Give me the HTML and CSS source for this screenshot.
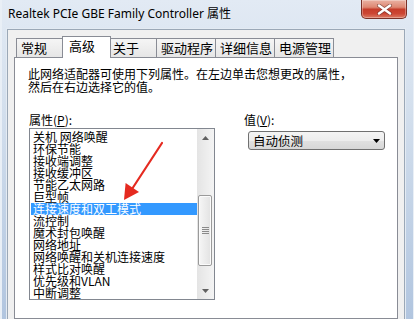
FILE: index.html
```html
<!DOCTYPE html>
<html lang="zh-CN">
<head>
<meta charset="utf-8">
<title>Realtek PCIe GBE Family Controller 属性</title>
<link rel="stylesheet" href="styles.css">
</head>
<body>
<div class="window">
  <div class="titlebar">
    <span class="title">Realtek PCIe GBE Family Controller 属性</span>
    <div class="close">
      <svg width="15" height="11" viewBox="0 0 15 11">
        <path d="M2 1.5 L13 9.5 M13 1.5 L2 9.5" stroke="#5a2a24" stroke-width="4" stroke-linecap="round" fill="none" opacity="0.55"/>
        <path d="M2 1.5 L13 9.5 M13 1.5 L2 9.5" stroke="#ffffff" stroke-width="2.4" stroke-linecap="round" fill="none"/>
      </svg>
    </div>
  </div>
  <div class="dialog">
    <div class="tabs">
      <div class="tab">常规</div>
      <div class="tab active">高级</div>
      <div class="tab">关于</div>
      <div class="tab">驱动程序</div>
      <div class="tab">详细信息</div>
      <div class="tab">电源管理</div>
    </div>
    <div class="panel">
      <p class="desc">此网络适配器可使用下列属性。在左边单击您想更改的属性，<br>然后在右边选择它的值。</p>
      <div class="props">
        <div class="col-left">
          <div class="label">属性(<u>P</u>):</div>
          <div class="listbox">
            <ul class="items">
              <li>关机 网络唤醒</li>
              <li>环保节能</li>
              <li>接收端调整</li>
              <li>接收缓冲区</li>
              <li>节能乙太网路</li>
              <li>巨型帧</li>
              <li class="selected">连接速度和双工模式</li>
              <li>流控制</li>
              <li>魔术封包唤醒</li>
              <li>网络地址</li>
              <li>网络唤醒和关机连接速度</li>
              <li>样式比对唤醒</li>
              <li>优先级和VLAN</li>
              <li>中断调整</li>
            </ul>
            <div class="scrollbar">
              <div class="sb-btn"><svg width="7" height="4" viewBox="0 0 7 4"><path d="M0 4 L3.5 0 L7 4 Z" fill="#606060"/></svg></div>
              <div class="sb-track">
                <div class="thumb"><span class="grip"></span></div>
              </div>
              <div class="sb-btn"><svg width="7" height="4" viewBox="0 0 7 4"><path d="M0 0 L3.5 4 L7 0 Z" fill="#606060"/></svg></div>
            </div>
          </div>
        </div>
        <div class="col-right">
          <div class="label">值(<u>V</u>):</div>
          <div class="combo">
            <span class="combo-text">自动侦测</span>
            <svg width="7" height="4" viewBox="0 0 7 4"><path d="M0 0 L3.5 4 L7 0 Z" fill="#000"/></svg>
          </div>
        </div>
      </div>
    </div>
  </div>
  <svg class="annotation" width="414" height="319" viewBox="0 0 414 319">
    <line x1="162" y1="143" x2="132" y2="189" stroke="#e52a20" stroke-width="2.2" stroke-linecap="round"/>
    <path d="M124 200 L125.6 183 L139 192 Z" fill="#e52a20"/>
  </svg>
</div>
</body>
</html>
```

FILE: styles.css
```css
* { box-sizing: border-box; }

body {
  margin: 0;
  background: #d9e4f0;
}

.window {
  position: relative;
  width: 414px;
  height: 319px;
  overflow: hidden;
  display: flex;
  flex-direction: column;
  background: linear-gradient(#e2eaf4 0%, #d3dfed 35%, #b1c5df 100%);
  box-shadow: inset 2px 0 0 #e9eff6, inset -1px 0 0 #e9eff6;
  font-family: "Noto Sans CJK SC", sans-serif;
  color: #000;
}

.titlebar {
  flex: none;
  height: 29px;
  display: flex;
  justify-content: space-between;
  align-items: flex-start;
}

.title {
  padding: 6px 0 0 8px;
  font: 12px/16px "Noto Sans", "Noto Sans CJK SC", sans-serif;
}

.close {
  width: 46px;
  height: 19px;
  margin-right: 7px;
  border: 1px solid #7a3128;
  border-top: none;
  border-radius: 0 0 5px 5px;
  background: linear-gradient(#eab2a3 0%, #de8873 40%, #c63d2b 52%, #cc4634 75%, #dc7a63 100%);
  box-shadow: inset 0 0 0 1px rgba(255, 255, 255, 0.3);
  display: flex;
  align-items: center;
  justify-content: center;
}

.dialog {
  flex: 1;
  display: flex;
  flex-direction: column;
  margin: 0 9px 0 7px;
  padding: 6px 6px 0 6px;
  background: #f0f0f0;
  border: 1px solid #9ba8b7;
  border-bottom: none;
  box-shadow: 0 0 0 1px #e4ebf3;
}

.tabs {
  display: flex;
  align-items: flex-end;
  padding-left: 2px;
  margin-bottom: -1px;
  position: relative;
  z-index: 1;
}

.tab {
  min-width: 49px;
  height: 20px;
  margin-right: -1px;
  padding: 0 2px 0 4px;
  border: 1px solid #898c95;
  background: linear-gradient(#f5f5f5, #e6e6e6);
  font-size: 13px;
  line-height: 18px;
  white-space: nowrap;
}

.tab.active {
  height: 22px;
  margin: 0 -3px 0 -2px;
  padding: 0 4px 3px 6px;
  border-bottom: none;
  background: #fff;
  line-height: 18px;
  position: relative;
  z-index: 2;
}

.panel {
  flex: 1;
  background: #fff;
  border: 1px solid #898c95;
  padding: 9px 13px 0 13px;
}

.desc {
  margin: 0;
  font-size: 12px;
  line-height: 13px;
  white-space: nowrap;
}

.props {
  display: flex;
  gap: 29px;
  margin-top: 20px;
}

.col-left {
  padding-left: 1px;
}

.label {
  height: 13px;
  font-size: 12px;
  line-height: 13px;
  white-space: nowrap;
}

.listbox {
  display: flex;
  width: 186px;
  height: 172px;
  margin-top: 2px;
  border: 1px solid #828790;
}

.items {
  flex: 1;
  list-style: none;
  margin: 0;
  padding: 2px 0 0 1px;
  overflow: hidden;
}

.items li {
  height: 12px;
  padding-left: 2px;
  font-size: 12px;
  line-height: 12px;
  white-space: nowrap;
}

.items li.selected {
  background: #3399ff;
  color: #fff;
}

.scrollbar {
  width: 17px;
  display: flex;
  flex-direction: column;
  background: linear-gradient(to right, #e4e4e4, #f4f4f4);
}

.sb-btn {
  flex: none;
  height: 17px;
  display: flex;
  align-items: center;
  justify-content: center;
}

.sb-track {
  flex: 1;
}

.thumb {
  height: 71px;
  margin: 49px 2px 0 1px;
  border: 1px solid #9a9a9a;
  border-radius: 2px;
  background: linear-gradient(to right, #f6f6f6, #e2e2e2);
  box-shadow: inset 0 0 0 1px #fbfbfb;
  display: flex;
  align-items: center;
  justify-content: center;
}

.grip {
  width: 7px;
  height: 7px;
  background: repeating-linear-gradient(#8a8a8a 0 1px, transparent 1px 2px);
}

.col-right {
  display: flex;
  flex-direction: column;
}

.combo {
  width: 137px;
  height: 19px;
  margin: 5px 0 0 4px;
  padding: 0 4px 0 4px;
  border: 1px solid #707070;
  border-radius: 3px;
  background: linear-gradient(#f4f4f4 0%, #ededed 50%, #e1e1e1 51%, #d7d7d7 100%);
  display: flex;
  align-items: center;
  justify-content: space-between;
}

.combo-text {
  font-size: 12.5px;
  line-height: 17px;
}

.annotation {
  position: absolute;
  left: 0;
  top: 0;
  pointer-events: none;
}
```
